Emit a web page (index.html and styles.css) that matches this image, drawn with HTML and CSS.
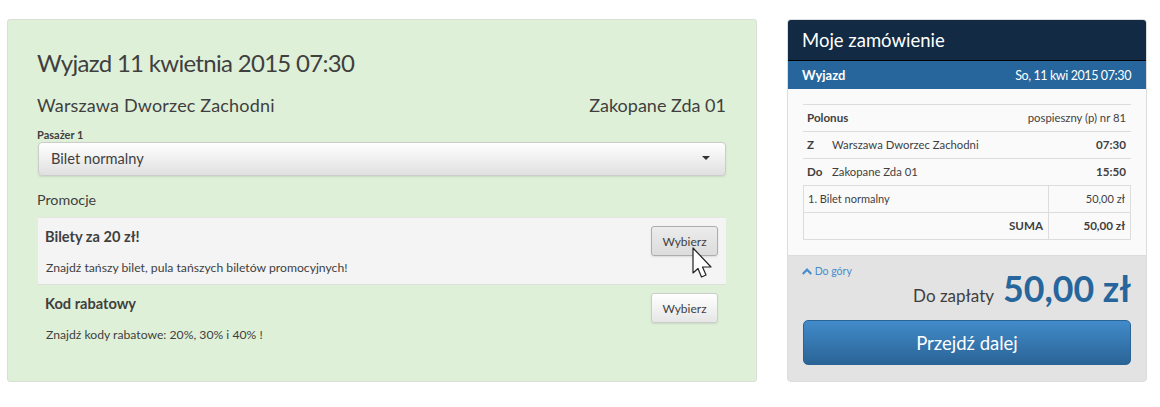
FILE: index.html
```html
<!DOCTYPE html>
<html lang="pl">
  <head>
    <meta charset="UTF-8" />
    <title>Moje zamówienie</title>
    <link rel="stylesheet" href="styles.css">
  </head>
  <body>
    <div class="page">
      <section class="trip">
        <h1>Wyjazd 11 kwietnia 2015 07:30</h1>
        <div class="route">
          <span class="route-from">Warszawa Dworzec Zachodni</span>
          <span>Zakopane Zda 01</span>
        </div>
        <label class="field-label">Pasażer 1</label>
        <div class="select">
          <span>Bilet normalny</span>
          <span class="caret"></span>
        </div>
        <h2>Promocje</h2>
        <div class="promo promo-active">
          <div class="promo-text">
            <h3>Bilety za 20 zł!</h3>
            <p>Znajdź tańszy bilet, pula tańszych biletów promocyjnych!</p>
          </div>
          <button class="btn btn-hover">
            Wybierz
            <svg class="cursor" width="20" height="32" viewBox="0 0 20 32">
              <path d="M1 1 V26 L6 21.5 L9.5 30 L14 28 L10.5 20 H19 Z" fill="#fff" stroke="#222" stroke-width="1.2" stroke-linejoin="round" />
            </svg>
          </button>
        </div>
        <div class="promo">
          <div class="promo-text">
            <h3>Kod rabatowy</h3>
            <p>Znajdź kody rabatowe: 20%, 30% i 40% !</p>
          </div>
          <button class="btn">Wybierz</button>
        </div>
      </section>

      <aside class="order">
        <div class="order-title">Moje zamówienie</div>
        <div class="order-sub">
          <strong>Wyjazd</strong>
          <span class="order-date">So, 11 kwi 2015 07:30</span>
        </div>
        <div class="order-body">
          <div class="row">
            <strong>Polonus</strong>
            <span class="row-end">pospieszny (p) nr 81</span>
          </div>
          <div class="row">
            <strong class="row-key">Z</strong>
            <span>Warszawa Dworzec Zachodni</span>
            <strong class="row-end">07:30</strong>
          </div>
          <div class="row">
            <strong class="row-key">Do</strong>
            <span>Zakopane Zda 01</span>
            <strong class="row-end">15:50</strong>
          </div>
          <table class="prices">
            <tr>
              <td>1. Bilet normalny</td>
              <td class="num">50,00 zł</td>
            </tr>
            <tr>
              <td class="num"><strong>SUMA</strong></td>
              <td class="num"><strong>50,00 zł</strong></td>
            </tr>
          </table>
        </div>
        <div class="order-foot">
          <a class="top-link" href="#">
            <svg width="10" height="7" viewBox="0 0 10 7"><path d="M0 5.2 L5 0 L10 5.2 L8.5 6.8 L5 3.2 L1.5 6.8 Z" fill="#4a8ccb" /></svg>
            Do góry
          </a>
          <div class="total">
            <span>Do zapłaty</span>
            <b>50,00 zł</b>
          </div>
          <button class="btn-primary">Przejdź dalej</button>
        </div>
      </aside>
    </div>
  </body>
</html>
```

FILE: styles.css
```css
body {
  margin: 0;
  font-family: "Lato", "Open Sans", sans-serif;
  color: #3f3f3f;
  background: #fff;
}

.page {
  display: flex;
  gap: 30px;
  padding: 19px 13px 0 7px;
}

/* left panel */
.trip {
  box-sizing: border-box;
  width: 750px;
  height: 363px;
  padding: 29px 30px 0;
  background: #dff0d8;
  border: 1px solid #d8dfd4;
  border-radius: 3px;
}

h1 {
  margin: 0 0 0 -1px;
  font-size: 24px;
  line-height: 28px;
  font-weight: 400;
  letter-spacing: -0.7px;
}

.route {
  display: flex;
  justify-content: space-between;
  margin: 16px 0 0 -1px;
  font-size: 18px;
  line-height: 24px;
}

.route-from {
  letter-spacing: 0.16px;
}

.field-label {
  display: block;
  margin: 11px 0 0 -1px;
  font-size: 11px;
  line-height: 14px;
  font-weight: 700;
}

.select {
  box-sizing: border-box;
  display: flex;
  justify-content: space-between;
  align-items: center;
  height: 34px;
  padding: 0 15px 2px 12px;
  font-size: 14.6px;
  background: linear-gradient(#fff, #e0e0e0);
  border: 1px solid #ccc;
  border-radius: 4px;
  box-shadow: 0 1px 2px rgba(0, 0, 0, 0.1);
}

.caret {
  border-top: 4px solid #333;
  border-left: 4px solid transparent;
  border-right: 4px solid transparent;
}

h2 {
  margin: 14px 0 7px -1px;
  font-size: 14.3px;
  line-height: 20px;
  font-weight: 400;
}

.promo {
  display: flex;
  justify-content: space-between;
  height: 66px;
  padding: 8px 8px 0 7px;
  box-sizing: border-box;
}

.promo-active {
  height: 68px;
  background: #f4f4f4;
  border-top: 1px solid #e3e6e1;
  border-bottom: 1px solid #dde0db;
}

.promo-text {
  padding-top: 1px;
}

h3 {
  margin: 0;
  font-size: 14.6px;
  line-height: 20px;
  font-weight: 700;
}

.promo-text p {
  margin: 12px 0 0 1px;
  font-size: 12.2px;
  line-height: 18px;
}

.btn {
  position: relative;
  box-sizing: border-box;
  width: 67px;
  height: 30px;
  padding: 0;
  font-family: inherit;
  font-size: 12px;
  color: #3f3f3f;
  background: linear-gradient(#fff, #e6e6e6);
  border: 1px solid #ccc;
  border-radius: 3px;
  box-shadow: 0 1px 2px rgba(0, 0, 0, 0.1);
}

.btn-hover {
  background: linear-gradient(#ececec, #dcdcdc);
  border-color: #adadad;
}

.cursor {
  position: absolute;
  left: 40px;
  top: 20px;
}

/* right panel */
.order {
  box-sizing: border-box;
  width: 360px;
  height: 363px;
  background: #e3e3e3;
  border: 1px solid #dcdcdc;
  border-radius: 4px;
  overflow: hidden;
}

.order-title {
  box-sizing: border-box;
  height: 41px;
  padding-left: 14px;
  font-size: 18.5px;
  line-height: 40px;
  color: #fff;
  background: #122a44;
  border-bottom: 1px solid #000;
}

.order-sub {
  box-sizing: border-box;
  display: flex;
  justify-content: space-between;
  align-items: center;
  height: 28px;
  padding: 0 15px 0 14px;
  font-size: 13px;
  color: #fff;
  background: #26669c;
}

.order-date {
  font-size: 12.5px;
  letter-spacing: -0.4px;
}

.order-body {
  box-sizing: border-box;
  height: 167px;
  padding: 15px 15px 0;
  background: #fafafa;
  border-bottom: 1px solid #ddd;
}

.row {
  box-sizing: border-box;
  display: flex;
  align-items: center;
  height: 27px;
  padding: 0 5px 2px 4px;
  font-size: 11.3px;
  border-top: 1px solid #ddd;
}

.row strong {
  font-size: 11.6px;
}

.row-key {
  width: 25px;
}

.row-end {
  margin-left: auto;
}

.prices {
  width: 100%;
  border-collapse: collapse;
  font-size: 11px;
}

.prices td {
  box-sizing: border-box;
  height: 27px;
  padding: 0 5px 2px 4px;
  border: 1px solid #ddd;
}

.prices td.num {
  text-align: right;
}

.prices td:last-child {
  width: 82px;
}

.prices strong {
  font-size: 11.6px;
}

.order-foot {
  position: relative;
  padding: 0 15px;
}

.top-link {
  position: absolute;
  left: 14px;
  top: 7px;
  font-size: 10.5px;
  line-height: 16px;
  color: #4a8ccb;
  text-decoration: none;
}

.total {
  box-sizing: border-box;
  display: flex;
  justify-content: flex-end;
  align-items: baseline;
  gap: 9px;
  height: 64px;
  padding-top: 14px;
  font-size: 17px;
}

.total b {
  font-size: 35.7px;
  line-height: 38px;
  font-weight: 700;
  color: #26669c;
}

.btn-primary {
  box-sizing: border-box;
  display: block;
  width: 100%;
  height: 45px;
  font-family: inherit;
  font-size: 18.5px;
  color: #fff;
  background: linear-gradient(#428bca, #2a6496);
  border: 1px solid #2a6496;
  border-radius: 5px;
}
```
